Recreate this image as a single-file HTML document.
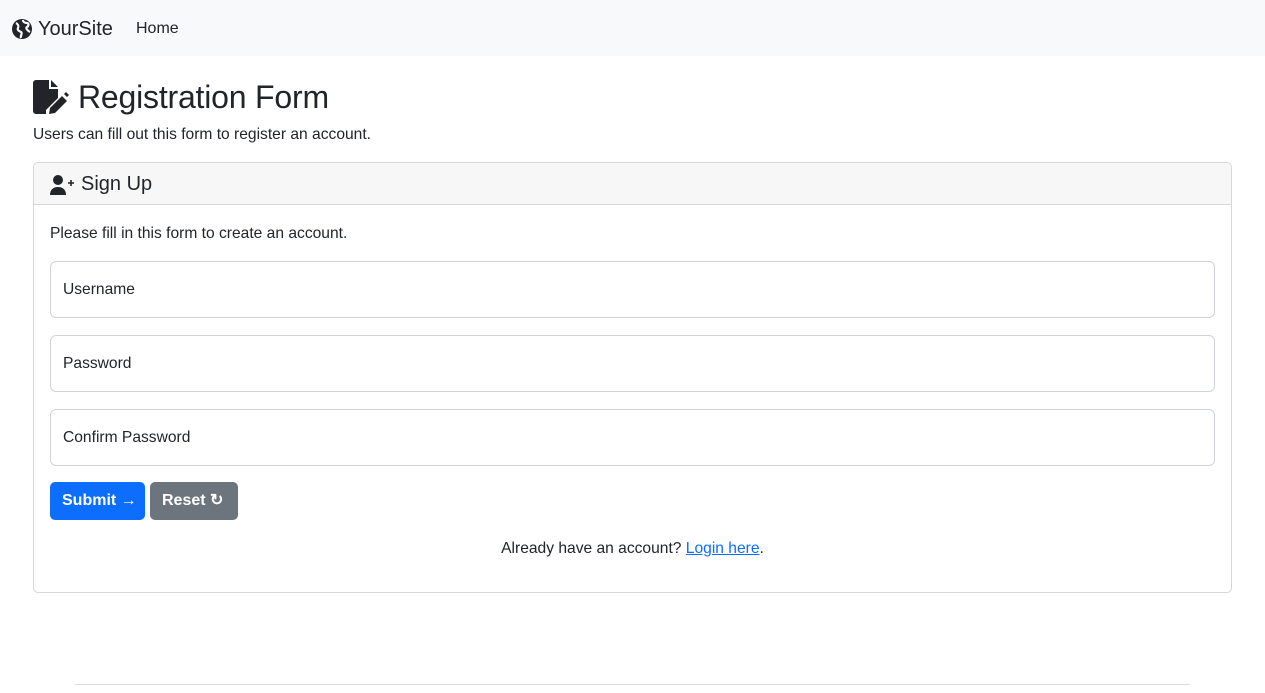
<!DOCTYPE html>
<html><head><meta charset="utf-8"><style>
*{box-sizing:border-box;margin:0;padding:0}
body{font-family:"Liberation Sans",sans-serif;color:#212529;font-size:16px;background:#fff;width:1265px;height:693px;position:relative;overflow:hidden}
.nav{height:56px;background:#f8f9fa;position:relative}
.brand{position:absolute;left:12px;top:17px;font-size:20px;display:flex;align-items:center;gap:6px;line-height:24px}
.home{position:absolute;left:136px;top:20px;font-size:16px}
h1{position:absolute;left:33px;top:77px;font-size:32px;font-weight:400;display:flex;align-items:center;gap:9px;line-height:40px;letter-spacing:-0.2px}
.lead{position:absolute;left:33px;top:126px;font-size:15.6px}
.card{position:absolute;left:33px;top:162px;width:1199px;height:431px;border:1px solid #d7d7d7;border-radius:5px;overflow:hidden}
.ch{height:42px;background:#f7f7f7;border-bottom:1px solid #d7d7d7;display:flex;align-items:center;padding-left:16px;padding-top:2px;font-size:20px;gap:6px}
.t{position:absolute;left:16px;top:62px;font-size:15.6px}
.in{position:absolute;left:16px;width:1165px;height:57px;border:1px solid #d0d4d8;border-radius:6px;padding-left:12px;line-height:56px;font-size:15.6px}
.btn{position:absolute;top:319px;height:38px;border-radius:5px;color:#fff;font-weight:bold;line-height:38px;padding-left:12px;font-size:16px}
.foot{position:absolute;top:377px;left:0;width:100%;text-align:center;font-size:15.6px}
a{color:#0d6efd}
.hr{position:absolute;left:75px;top:684px;width:1115px;height:1px;background:#ddd}
</style></head><body>
<div class="nav">
<div class="brand"><svg width="20" height="20" viewBox="0 0 20 20"><circle cx="10" cy="10" r="10" fill="#212529"/><path d="M4 4c2 1 3 3 2 5s1 3 3 4-1 4 0 6M11 1c0 2 2 3 4 3s2 3 0 4 1 4 3 5" stroke="#f8f9fa" stroke-width="2.2" fill="none"/></svg>YourSite</div>
<div class="home">Home</div>
</div>
<h1><svg width="36" height="34" viewBox="0 0 36 34"><path d="M0 3a3 3 0 0 1 3-3h13v9h9v9l-12 12v4H3a3 3 0 0 1-3-3z" fill="#212529"/><path d="M18 0l7 7h-7z" fill="#212529"/><path d="M16 34l1-6 12-12 5 5-12 12z" fill="#212529"/><path d="M31 14l2-2 3 3-2 2z" fill="#212529"/></svg>Registration Form</h1>
<div class="lead">Users can fill out this form to register an account.</div>
<div class="card">
<div class="ch"><svg width="25" height="20" viewBox="0 0 25 20"><circle cx="8" cy="5" r="5" fill="#212529"/><path d="M0 20c0-5 3-8 8-8s8 3 8 8z" fill="#212529"/><path d="M18 8h6M21 5v6" stroke="#212529" stroke-width="1.6"/></svg>Sign Up</div>
<div class="t">Please fill in this form to create an account.</div>
<div class="in" style="top:98px">Username</div>
<div class="in" style="top:172px">Password</div>
<div class="in" style="top:246px">Confirm Password</div>
<div class="btn" style="left:16px;width:95px;background:#0d6efd">Submit →</div>
<div class="btn" style="left:116px;width:88px;background:#6c757d">Reset ↻</div>
<div class="foot">Already have an account? <a href="#">Login here</a>.</div>
</div>
<div class="hr"></div>
</body></html>
